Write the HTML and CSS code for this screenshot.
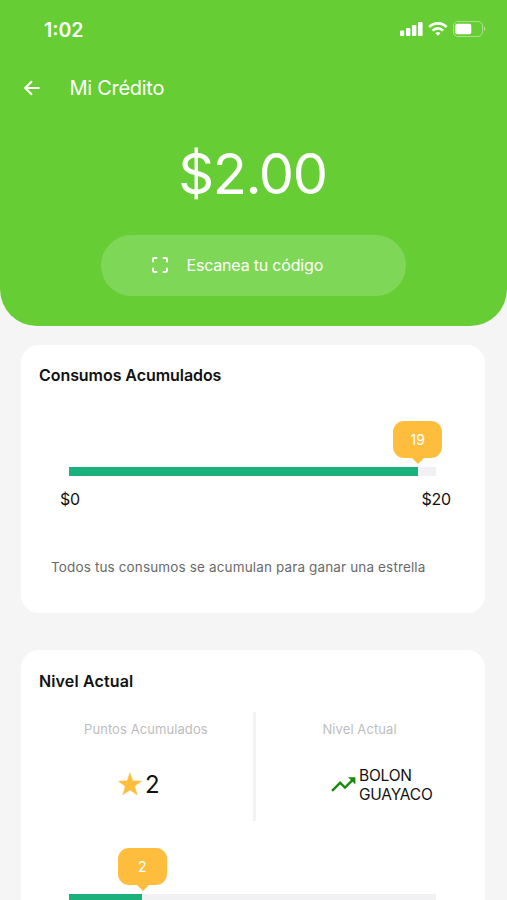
FILE: index.html
```html
<!DOCTYPE html>
<html lang="es">
<head>
<meta charset="utf-8">
<meta name="viewport" content="width=device-width, initial-scale=1">
<title>Mi Crédito</title>
<link rel="stylesheet" href="styles.css">
</head>
<body>
<div class="screen">
  <header class="hero">
    <div class="status">
      <span class="time">1:02</span>
      <svg class="status-icons" width="88" height="20" viewBox="0 0 88 20" fill="#fff">
        <rect x="1" y="11.500" width="4.200" height="5.500" rx="1"/>
        <rect x="7" y="9" width="4.400" height="8" rx="1"/>
        <rect x="13" y="6" width="4.400" height="11" rx="1"/>
        <rect x="19" y="3" width="4.600" height="14" rx="1"/>
        <g fill="none" stroke="#fff" stroke-width="2.700">
          <path d="M30.200 8a12.400 12.400 0 0 1 17.400 0"/>
          <path d="M33.600 11.600a7.600 7.600 0 0 1 10.600 0"/>
        </g>
        <path d="M38.900 16.700l-2.600-2.500a3.800 3.800 0 0 1 5.200 0z"/>
        <rect x="54.500" y="2.500" width="29" height="15" rx="4.500" fill="none" stroke="#fff" stroke-opacity=".42"/>
        <rect x="56.300" y="4.700" width="16" height="10.600" rx="2"/>
        <path d="M85 7.500v4.800c1.800-.8 1.800-4 0-4.800z" fill-opacity=".45"/>
      </svg>
    </div>
    <div class="nav">
      <svg class="back" width="18" height="18" viewBox="0 0 18 18" fill="none" stroke="#fff" stroke-width="2"><path d="M16.500 9H2.500M9 2.200L2.200 9L9 15.800"/></svg>
      <h1 class="title">Mi Crédito</h1>
    </div>
    <div class="amount">$2.00</div>
    <button class="scan">
      <svg width="18" height="18" viewBox="0 0 18 18" fill="none" stroke="#fff" stroke-width="1.900" stroke-linecap="round" stroke-linejoin="round"><path d="M2 5.500V3.200Q2 2 3.200 2H5.500M12.500 2h2.300Q16 2 16 3.200V5.500M16 12.500v2.300Q16 16 14.800 16H12.500M5.500 16H3.200Q2 16 2 14.800V12.500"/></svg>
      <span class="scan-label">Escanea tu código</span>
    </button>
  </header>

  <main class="cards">
    <section class="card consumos">
      <h2 class="heading">Consumos Acumulados</h2>
      <div class="progress">
        <div class="fill" style="width:95%"><span class="bubble">19</span></div>
      </div>
      <div class="range"><span>$0</span><span>$20</span></div>
      <p class="note">Todos tus consumos se acumulan para ganar una estrella</p>
    </section>

    <section class="card nivel">
      <h2 class="heading">Nivel Actual</h2>
      <div class="stats">
        <div class="stat">
          <span class="stat-label">Puntos Acumulados</span>
          <div class="stat-value points">
            <svg width="24" height="24" viewBox="0 0 24 24" fill="#ffbd3d" stroke="#ffbd3d" stroke-width=".5"><path d="M12 .7l2.900 8.200 8.700.2-6.900 5.200 2.500 8.500-7.200-4.900-7.200 4.900 2.500-8.500L.4 9.100l8.700-.2z"/></svg>
            <span class="number">2</span>
          </div>
        </div>
        <div class="stat">
          <span class="stat-label">Nivel Actual</span>
          <div class="stat-value level">
            <svg width="29" height="29" viewBox="1 0 24 24" fill="#188a0c"><path d="M16 6l2.290 2.290-4.880 4.880-4-4L2 16.590 3.410 18l6-6 4 4 6.300-6.290L22 12V6z"/></svg>
            <span class="level-name">BOLON<br>GUAYACO</span>
          </div>
        </div>
      </div>
      <div class="progress">
        <div class="fill" style="width:20%"><span class="bubble">2</span></div>
      </div>
    </section>
  </main>
</div>
</body>
</html>
```
FILE: styles.css
```css
* {
  box-sizing: border-box;
}

body {
  margin: 0;
  background: #f5f5f5;
  font-family: Inter, "Liberation Sans", sans-serif;
  color: #111;
}

h1, h2, p {
  margin: 0;
}

svg {
  display: block;
  flex: none;
}

.screen {
  width: 507px;
  height: 900px;
  overflow: hidden;
}

.hero {
  display: flex;
  flex-direction: column;
  height: 326px;
  background: #66cd34;
  border-radius: 0 0 37px 37px;
  color: #fff;
}

.status {
  display: flex;
  align-items: center;
  justify-content: space-between;
  height: 58px;
  padding: 0 20px 0 44px;
}

.time {
  padding-top: 1px;
  font-size: 19.5px;
  font-weight: 600;
}

.nav {
  display: flex;
  align-items: center;
  height: 60px;
  padding-left: 23px;
}

.title {
  margin-left: 28.5px;
  font-size: 20px;
  font-weight: 400;
  line-height: 24px;
  letter-spacing: -.28px;
}

.amount {
  height: 117px;
  padding-right: 2px;
  font-size: 56px;
  font-weight: 400;
  line-height: 113px;
  letter-spacing: -1.4px;
  text-align: center;
}

.scan {
  display: flex;
  align-items: center;
  align-self: center;
  width: 305px;
  height: 61px;
  padding: 0 0 1px 50px;
  border: 0;
  border-radius: 31px;
  background: #7fd757;
  color: #fff;
  font: 400 16px/20px Inter, "Liberation Sans", sans-serif;
  letter-spacing: -.19px;
}

.scan-label {
  margin-left: 17.5px;
}

.cards {
  display: flex;
  flex-direction: column;
  gap: 37px;
  padding: 19px 22px 0 21px;
}

.card {
  border-radius: 18px;
  background: #fff;
}

.consumos {
  height: 268px;
}

.nivel {
  height: 320px;
}

.heading {
  padding: 20px 18px 0;
  font-size: 16px;
  font-weight: 600;
  line-height: 20px;
  letter-spacing: -.06px;
}

.nivel .heading {
  padding-top: 21px;
  letter-spacing: .14px;
}

.progress {
  width: 367px;
  height: 9px;
  margin-left: 48px;
  background: #f1f1f3;
}

.consumos .progress {
  margin-top: 82px;
}

.nivel .progress {
  margin-top: 73px;
}

.fill {
  position: relative;
  height: 100%;
  background: #1bb17c;
}

.bubble {
  position: absolute;
  right: -24.5px;
  bottom: 18px;
  width: 49px;
  height: 37px;
  border-radius: 11px;
  background: #ffbd3d;
  color: #fff;
  font-size: 14px;
  line-height: 37px;
  text-align: center;
}

.bubble::after {
  content: "";
  position: absolute;
  top: 36px;
  left: 18px;
  border: solid transparent;
  border-width: 7px 7px 0;
  border-top-color: #ffbd3d;
}

.range {
  display: flex;
  justify-content: space-between;
  margin-top: 13px;
  padding: 0 34px 0 39px;
  font-size: 16px;
  line-height: 20px;
  letter-spacing: -.2px;
}

.note {
  margin-top: 48px;
  padding-left: 30px;
  color: #6a6a6a;
  font-size: 13.5px;
  line-height: 20px;
  letter-spacing: .14px;
  white-space: nowrap;
}

.stats {
  display: grid;
  grid-template-columns: 234.5px 1fr;
  height: 109px;
  margin-top: 21px;
}

.stat {
  display: flex;
  flex-direction: column;
}

.stat:first-child {
  border-right: 3px solid #f3f3f3;
}

.stat-label {
  margin-top: 7px;
  color: #bdbdbd;
  font-size: 13px;
  line-height: 20px;
  letter-spacing: .08px;
  white-space: nowrap;
}

.stat:first-child .stat-label {
  margin-left: 63px;
}

.stat:last-child .stat-label {
  margin-left: 67px;
}

.stat-value {
  display: flex;
  align-items: center;
  height: 40px;
  margin-top: 25px;
}

.points {
  padding-left: 97px;
}

.number {
  margin-left: 3px;
  padding-top: 2px;
  font-size: 24px;
  line-height: 30px;
}

.level {
  padding-left: 74.5px;
}

.level-name {
  padding-top: 3px;
  font-size: 15.5px;
  line-height: 18.5px;
  letter-spacing: -.22px;
}
```
